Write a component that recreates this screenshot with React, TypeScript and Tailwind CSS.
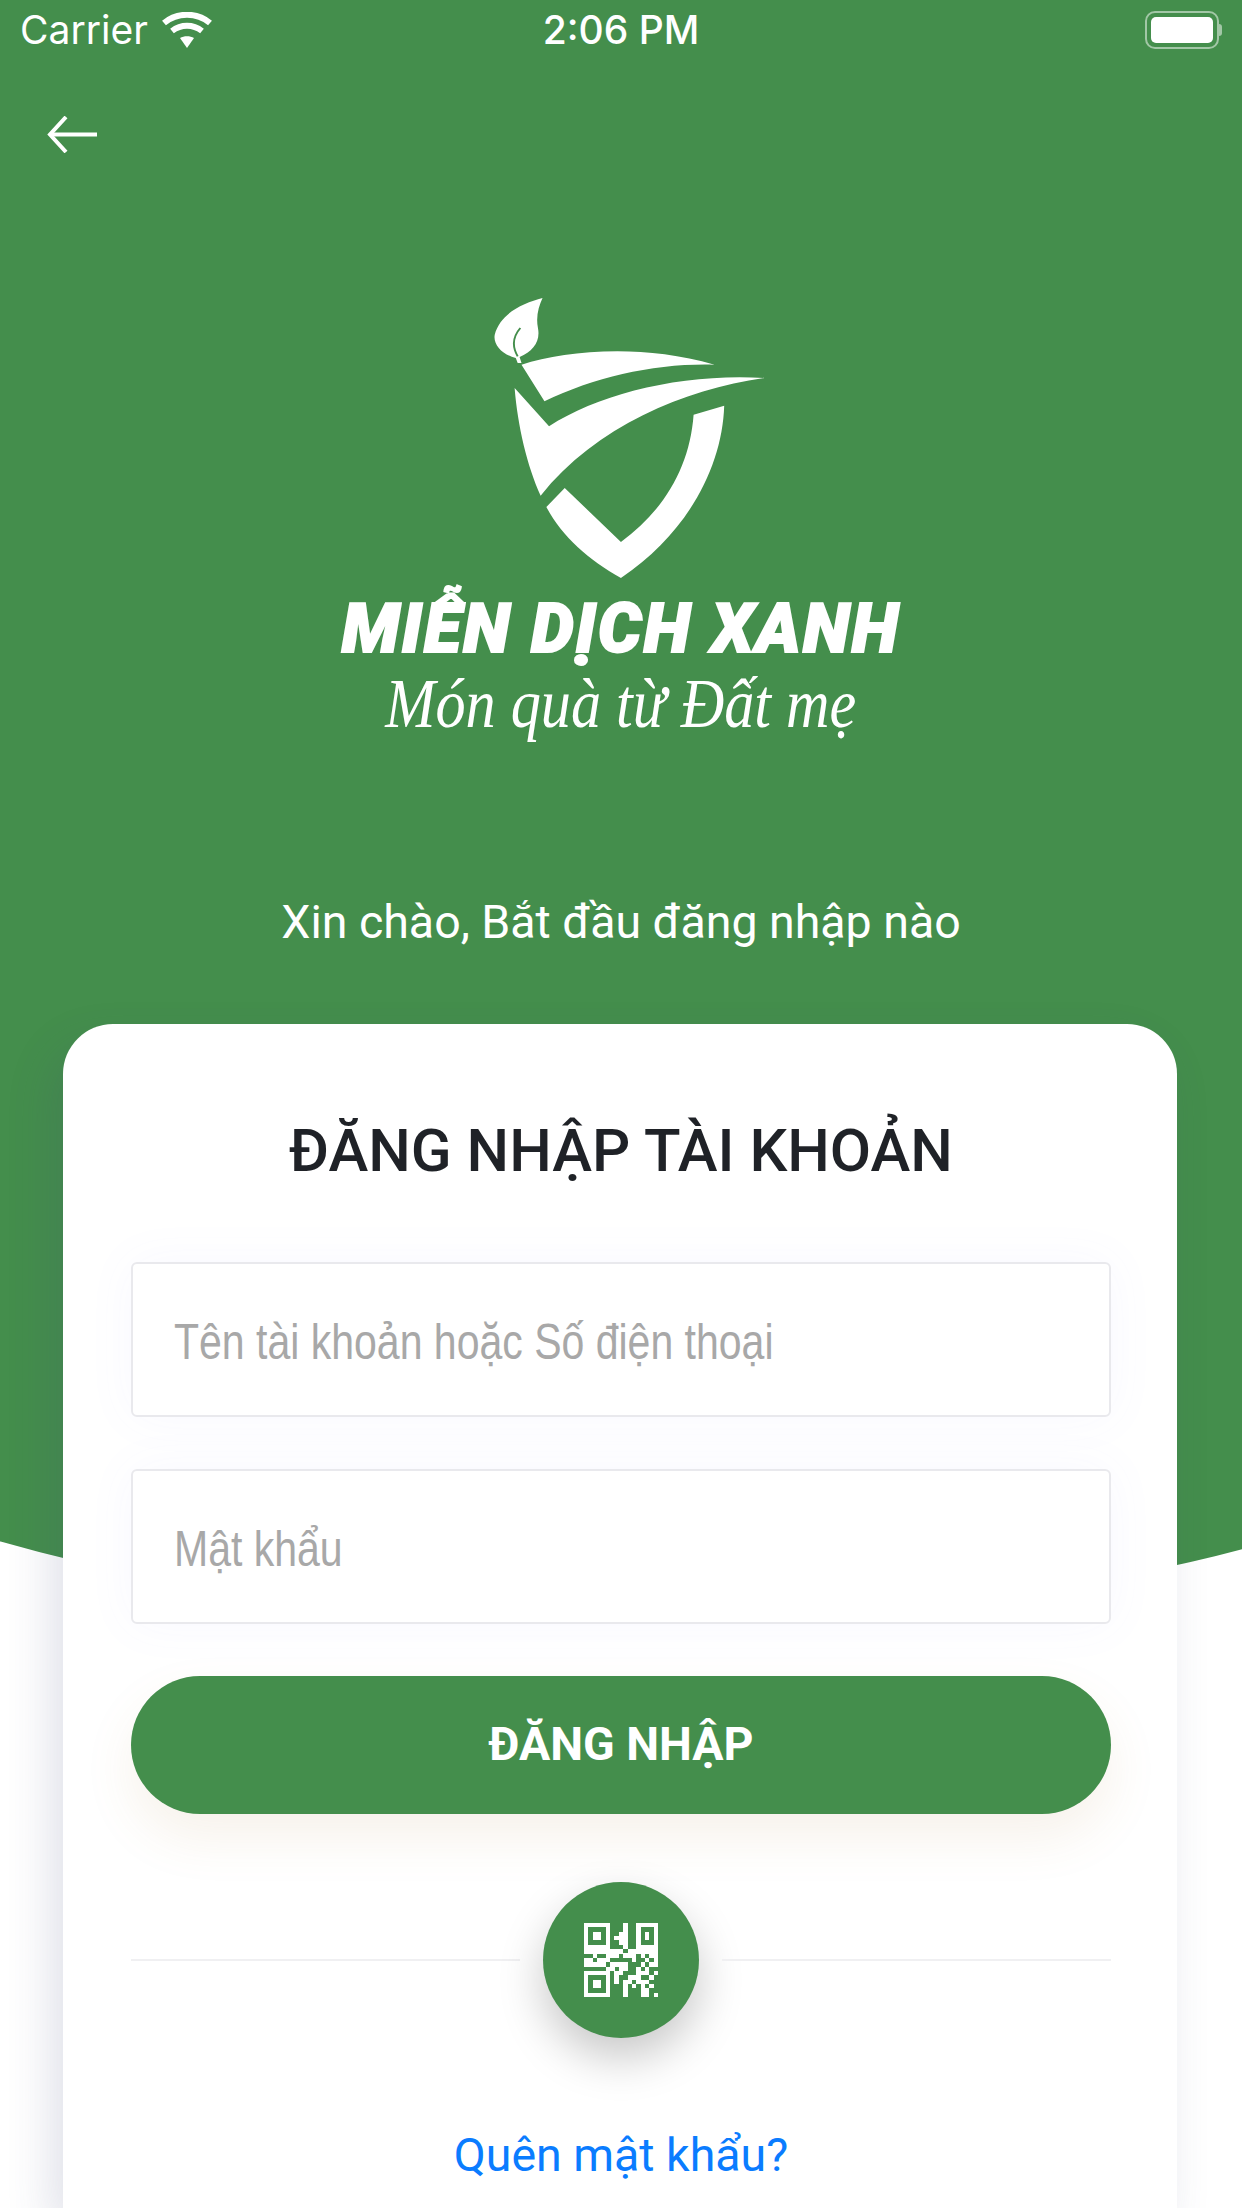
const QR = [
  "######...#..#####",
  "#....#...#..#...#",
  "#.##.#..##..#.#.#",
  "#.##.#.###..#.#.#",
  "#....#..##..#...#",
  "######...#..#####",
  "#########.#######",
  "..#..###.###.#.##",
  "##.###.....#..#.#",
  "#####.####...#.##",
  ".....##.##..#.#..",
  "######.##...###.#",
  "#....#.#..###..#.",
  "#.##.#.#.##.###..",
  "#.##.#...#.#.#.#.",
  "#....#...#...##..",
  "######...#...##.#",
];

function QrIcon() {
  return (
    <svg width="74" height="74" viewBox="0 0 17 17" shapeRendering="crispEdges">
      {QR.flatMap((row, y) =>
        row.split("").map((c, x) => (c === "#" ? <rect key={`${x}-${y}`} x={x} y={y} width="1.02" height="1.02" fill="#fff" /> : null)),
      )}
    </svg>
  );
}

function Wifi() {
  return (
    <svg width="50" height="36" viewBox="0 0 50 36" fill="none" stroke="#fff" strokeWidth="6">
      <path d="M2 11 C15 0 35 0 48 11" />
      <path d="M10 19 C19 12 31 12 40 19" />
      <path d="M25 36 L18 26 C22 23.500 28 23.500 32 26 Z" fill="#fff" stroke="none" />
    </svg>
  );
}

function Battery() {
  return (
    <div className="flex items-center">
      <div className="w-[74px] h-[38px] rounded-[10px] border-2 border-white/50 p-[4px]">
        <div className="w-full h-full rounded-[5px] bg-white" />
      </div>
      <div className="w-[3px] h-[12px] rounded-r-full bg-white/50" />
    </div>
  );
}

function Logo() {
  return (
    <div className="flex flex-col items-center">
      <svg width="283" height="290" viewBox="440 40 740 870" preserveAspectRatio="none" className="ml-[19px]" fill="#fff">
        <path d="M580 55 C530 70 470 100 455 165 C450 195 475 225 510 235 L515 250 L525 250 L520 232 C555 215 575 185 568 145 C562 110 570 80 580 55 Z" />
        <path d="M515 230 C500 200 503 170 522 145" fill="none" stroke="#448e4c" strokeWidth="5" />
        <path d="M525 255 C640 215 830 190 1030 255 C880 250 720 290 585 365 Z" />
        <path d="M507 325 L597 440 C730 340 950 280 1160 295 C950 330 720 440 575 648 C540 560 515 440 507 325 Z" />
        <path d="M1055 378 C1050 560 960 760 785 895 C700 840 630 770 590 682 L638 625 L785 787 C900 690 965 560 975 405 Z" />
      </svg>
      <div className="mt-[4px] text-[68px] leading-[84px] font-black italic text-white font-['Roboto',sans-serif] tracking-[2.3px] whitespace-nowrap [-webkit-text-stroke:2px_white]">
        MIỄN DỊCH XANH
      </div>
      <div className="mt-[-6px] text-[70px] leading-[78px] italic text-white font-['Liberation_Serif',serif] whitespace-nowrap scale-x-[0.86]">
        Món quà từ Đất mẹ
      </div>
    </div>
  );
}

function Field({ label }: { label: string }) {
  return (
    <div className="h-[155px] rounded-[6px] border-2 border-[#e9e9ed] bg-white flex items-center pl-[41px] pt-[5px] shadow-[0_0_50px_rgba(110,110,255,0.05)]">
      <span className="text-[50px] text-[#a8a8a8] font-['Liberation_Sans',sans-serif] origin-left whitespace-nowrap scale-x-[0.82]">
        {label}
      </span>
    </div>
  );
}

export default function App() {
  return (
    <div className="relative w-[1242px] h-[2208px] overflow-hidden bg-white font-['Roboto',sans-serif] flex flex-col">
      <div className="absolute left-[-365px] top-0 w-[2000px] h-[1621px] bg-[#448e4c] rounded-b-[1000px_350px]" />

      <div className="relative flex flex-col flex-1">
        <div className="h-[60px] px-[20px] flex items-center text-white">
          <div className="flex-1 flex items-center gap-[14px]">
            <span className="font-['Inter',sans-serif] text-[39px] font-normal">Carrier</span>
            <Wifi />
          </div>
          <span className="font-['Inter',sans-serif] text-[39px] font-medium">2:06 PM</span>
          <div className="flex-1 flex justify-end">
            <Battery />
          </div>
        </div>

        <div className="mt-[56px] pl-[47px] h-[37px]">
          <svg width="50" height="37" viewBox="0 0 50 37" fill="none" stroke="#fff" strokeWidth="4">
            <path d="M50 18.500 H3" />
            <path d="M19 1 L3 18.500 L19 36" />
          </svg>
        </div>

        <div className="mt-[140px]">
          <Logo />
        </div>

        <p className="mt-[151px] text-center text-white text-[46.500px] leading-[56px]">Xin chào, Bắt đầu đăng nhập nào</p>

        <div className="mt-[74px] ml-[63px] mr-[65px] flex-1 bg-white rounded-t-[50px] rounded-b-none pl-[68px] pr-[66px] shadow-[-12px_20px_45px_rgba(60,70,120,0.16)]">
          <h1 className="mt-[90px] h-[74px] flex items-center justify-center text-[60px] font-medium text-[#1f2227] whitespace-nowrap">
            ĐĂNG NHẬP TÀI KHOẢN
          </h1>
          <div className="mt-[74px] flex flex-col gap-[52px]">
            <Field label="Tên tài khoản hoặc Số điện thoại" />
            <Field label="Mật khẩu" />
            <button className="h-[138px] w-full rounded-full bg-[#448e4c] text-white text-[46.500px] font-bold shadow-[0_24px_50px_rgba(180,130,60,0.10)]">
              ĐĂNG NHẬP
            </button>
          </div>
          <div className="mt-[68px] flex items-center">
            <div className="flex-1 h-[2px] bg-[#f0f0f2]" />
            <div className="mx-[23px] w-[156px] h-[156px] rounded-full bg-[#448e4c] flex items-center justify-center shadow-[0_20px_45px_rgba(0,0,0,0.22)]">
              <QrIcon />
            </div>
            <div className="flex-1 h-[2px] bg-[#f0f0f2]" />
          </div>
          <p className="mt-[89px] text-center text-[46.500px] leading-[56px] text-[#0a7cff]">Quên mật khẩu?</p>
        </div>
      </div>
    </div>
  );
}
